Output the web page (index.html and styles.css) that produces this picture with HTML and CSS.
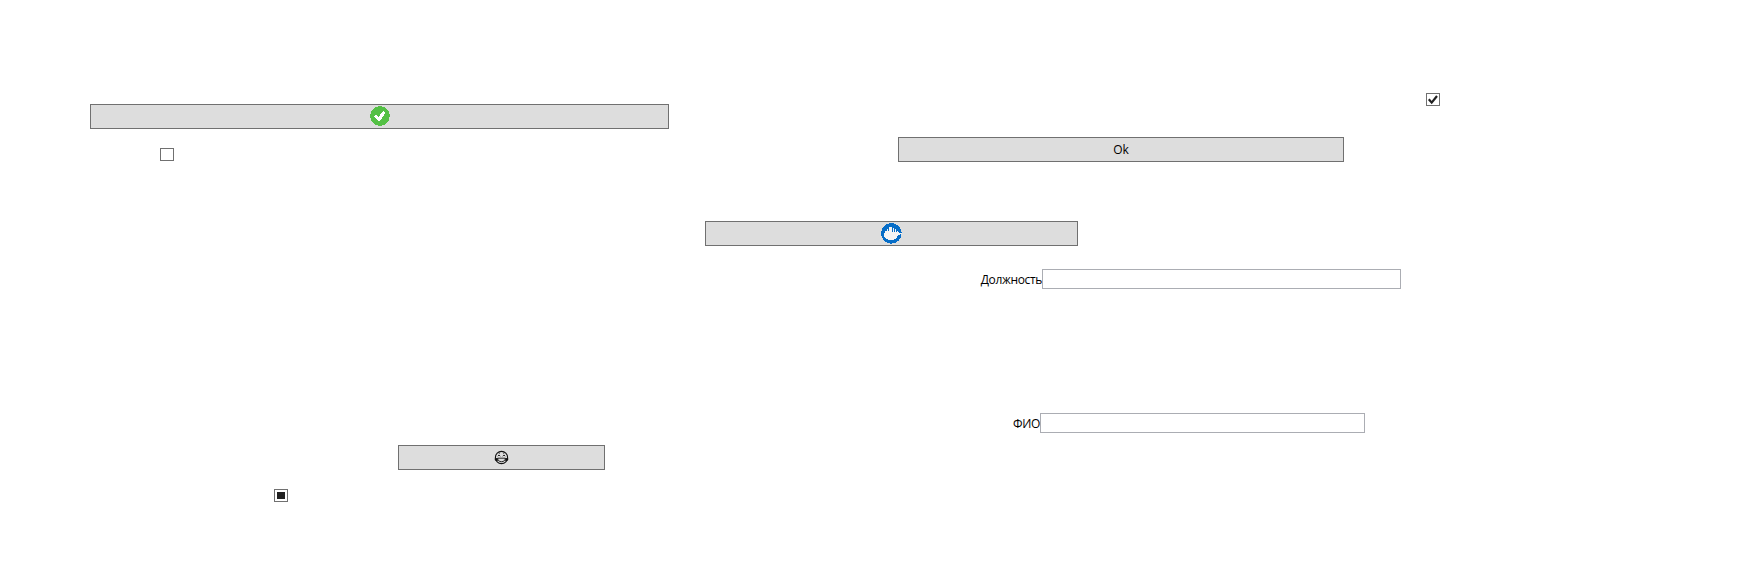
FILE: index.html
```html
<!DOCTYPE html>
<html lang="ru">
<head>
<meta charset="utf-8">
<title>Controls</title>
<link rel="stylesheet" href="styles.css">
</head>
<body>
<main class="window">
  <section class="panel panel-left">
    <button class="button button-confirm" aria-label="confirm">
      <svg width="20" height="20" viewBox="0 0 20 20" shape-rendering="crispEdges"><circle cx="10" cy="10" r="9.8" fill="#54c045"/><path d="M4.2 10.5 6.4 8.7 8.8 10.8 13 5 15.6 6.6 10 15H8.4z" fill="#fff"/></svg>
    </button>
    <span class="check check-empty"></span>
    <button class="button button-face" aria-label="face">
      <svg width="15" height="15" viewBox="0 0 15 15"><circle cx="7.5" cy="7.5" r="6.1" fill="none" stroke="#111" stroke-width="1.1"/><path d="M3.8 6.2 5 5l1.3 1.2M8.7 6.2 10 5l1.2 1.2M4.8 3.7l1-.7M9.2 3l1 .7" fill="none" stroke="#111" stroke-width=".9"/><path d="M3.7 8.2h7.6c0 2.2-1.5 3.500-3.800 3.500S3.700 10.400 3.700 8.200z" fill="none" stroke="#111" stroke-width=".9"/><path d="M.7 8.200 3.600 8l.3 2.800-1.700.5L.8 10zM14.300 8.200 11.400 8l-.3 2.800 1.700.5L14.200 10z" fill="#111"/></svg>
    </button>
    <span class="check check-mixed"><span class="mixed-mark"></span></span>
  </section>
  <section class="panel panel-right">
    <span class="check check-on">
      <svg width="12" height="11" viewBox="0 0 12 11"><path d="M1.800 5.200 4.700 8.600 10 2" fill="none" stroke="#212121" stroke-width="2.200"/></svg>
    </span>
    <button class="button button-ok">Ok</button>
    <button class="button button-docker" aria-label="docker">
      <svg width="21" height="21" viewBox="0 0 21 21" shape-rendering="crispEdges"><circle cx="10.400" cy="10.400" r="10.300" fill="#066dc7"/><path d="M3 10h1V8h2V6h1v2h1V4h3v5h1V5h1v4h1V6h1v3h1V8h1v1h1v1h3v1h-2v1h-2c-.6 3.200-3 5-6.500 5-4.500 0-7-1.600-7.500-5z" fill="#f4f4f4"/></svg>
    </button>
    <label class="field field-position"><span class="field-label">Должность</span><input class="field-input" type="text"></label>
    <label class="field field-name"><span class="field-label">ФИО</span><input class="field-input" type="text"></label>
  </section>
</main>
</body>
</html>
```
FILE: styles.css
```css
* { box-sizing: border-box; }
body {
  margin: 0;
  background: #fff;
  color: #000;
  font: 12px/16px "Open Sans", "Noto Sans", sans-serif;
}
.window {
  display: grid;
  grid-template-columns: 700px 1fr;
  height: 576px;
}
.panel {
  display: flex;
  flex-direction: column;
  align-items: flex-start;
}
.panel-left { padding-top: 104px; }
.panel-right { padding-top: 93px; }
.button {
  display: flex;
  align-items: center;
  justify-content: center;
  height: 25px;
  padding: 0;
  border: 1px solid #707070;
  border-radius: 0;
  background: #ddd;
  color: #000;
  font: inherit;
}
.button svg, .check svg { display: block; }
.button-confirm { width: 579px; margin-left: 90px; padding-bottom: 1px; }
.button-face { width: 207px; margin: 284px 0 0 398px; }
.button-ok { width: 446px; margin: 31px 0 0 198px; }
.button-docker { width: 373px; margin: 59px 0 0 5px; }
.check {
  display: flex;
  align-items: center;
  justify-content: center;
  width: 14px;
  height: 13px;
  border: 1px solid #707070;
  background: #fff;
}
.check-empty { margin: 19px 0 0 160px; }
.check-mixed { margin: 19px 0 0 274px; }
.check-on { margin-left: 726px; }
.mixed-mark {
  width: 8px;
  height: 7px;
  background: #212121;
}
.field {
  display: flex;
  justify-content: flex-end;
  height: 20px;
}
.field-label { padding-top: 3px; }
.field-input {
  height: 20px;
  padding: 0 2px;
  border: 1px solid #abadb3;
  border-radius: 0;
  background: #fff;
  font: inherit;
  outline: none;
}
.field-position { width: 701px; margin-top: 23px; }
.field-position .field-label { letter-spacing: -0.35px; }
.field-position .field-input { width: 359px; }
.field-name { width: 665px; margin-top: 124px; }
.field-name .field-label { letter-spacing: -0.3px; }
.field-name .field-input { width: 325px; }
```
